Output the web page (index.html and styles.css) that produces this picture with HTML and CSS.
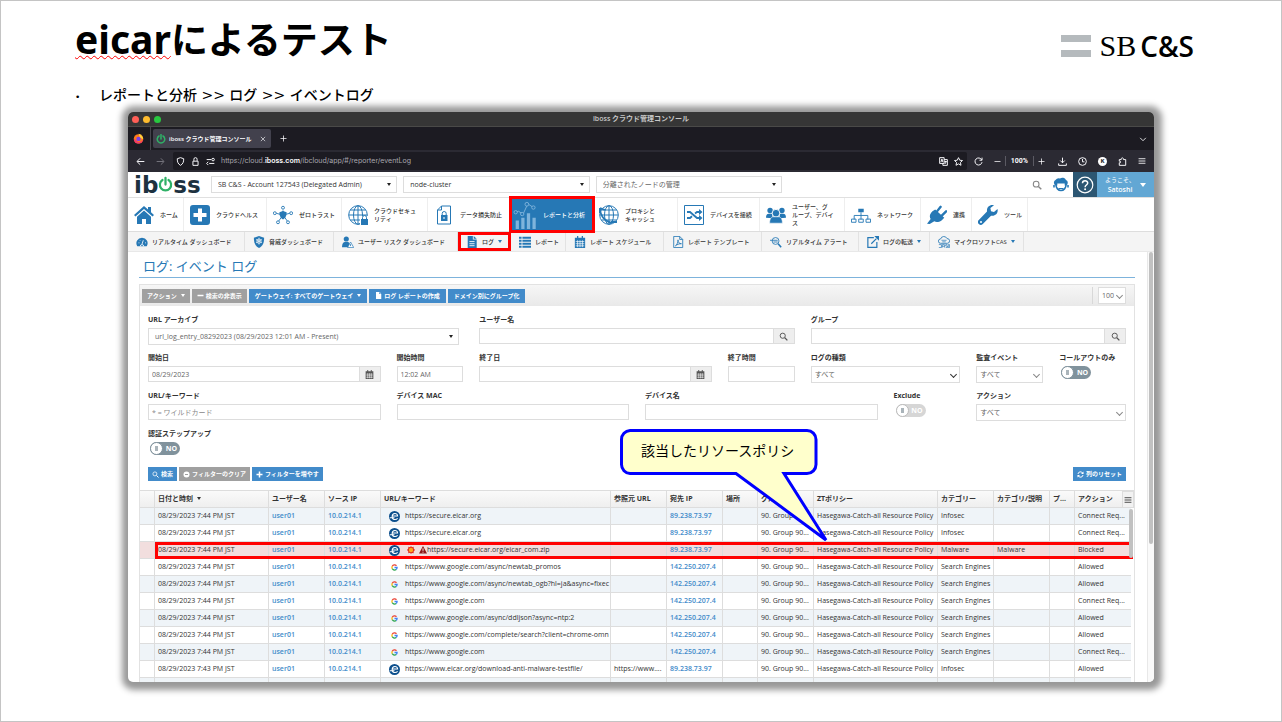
FILE: index.html
```html
<!DOCTYPE html>
<html lang="ja">
<head>
  <meta charset="utf-8">
  <title>eicarによるテスト</title>
  <link rel="stylesheet" href="styles.css">
</head>
<body>
  <!-- icon sprite -->
  <svg class="sprite" aria-hidden="true">
    <symbol id="power" viewBox="0 0 20 20"><path d="M6 4a7.500 7.500 0 1 0 8 0M10 1v9" fill="none" stroke="#2fb167" stroke-width="3" stroke-linecap="round"/></symbol>
    <symbol id="home" viewBox="0 0 20 20"><path d="M10 1 0 10l1.500 1.500L10 4l8.500 7.500L20 10l-3-2.700V2h-3v2.600zM10 5.500 3 11.700V19h5v-5h4v5h5v-7.300z"/></symbol>
    <symbol id="health" viewBox="0 0 20 20"><path fill-rule="evenodd" d="M3 0h14a3 3 0 0 1 3 3v14a3 3 0 0 1-3 3H3a3 3 0 0 1-3-3V3a3 3 0 0 1 3-3zm5 3.500V8H3.500v4H8v4.500h4V12h4.500V8H12V3.500z"/></symbol>
    <symbol id="zero" viewBox="0 0 22 20"><path d="M11 5v4M3 8l8 2 8-2M11 10l-5 7M11 10l5 7" fill="none" stroke="currentColor"/><path d="m11 5.500 4 1.500c0 4-1 6-4 8-3-2-4-4-4-8z"/><g fill="#fff" stroke="currentColor"><circle cx="11" cy="2" r="1.600"/><circle cx="2" cy="8" r="1.600"/><circle cx="20" cy="8" r="1.600"/><circle cx="5.500" cy="18" r="1.600"/><circle cx="16.500" cy="18" r="1.600"/></g></symbol>
    <symbol id="globe" viewBox="0 0 20 20"><g fill="none" stroke="currentColor"><circle cx="10" cy="10" r="9.300"/><ellipse cx="10" cy="10" rx="4.500" ry="9.300"/><path d="M10 1v18M1 10h18M2.500 5h15M2.500 15h15"/></g></symbol>
    <symbol id="globelock" viewBox="0 0 20 20"><use href="#globe"/><path d="M12 11h8v9h-8z" fill="#fff"/><path d="M13 14h7v6h-7z"/><path d="M14.500 14v-1.500a2 2 0 0 1 4 0V14" fill="none" stroke="currentColor"/></symbol>
    <symbol id="doclock" viewBox="0 0 20 20"><path d="M7.500 1H16.500v18h-13V5zM7.500 1v4h-4" fill="none" stroke="currentColor"/><path d="M7 10h6.500v6H7z"/><path d="M8.200 10V8.500a2 2 0 0 1 4 0V10" fill="none" stroke="currentColor"/><path d="M10 12v2" stroke="#fff"/></symbol>
    <symbol id="chart" viewBox="0 0 24 30"><path d="M2 21h3.500v9H2zM8 18h3.500v12H8zM14 13h3.500v17H14zM20 18h3.500v12H20z"/><path d="m2 12 3-1 5 3 5-11 6 4" fill="none" stroke="currentColor"/><g fill="#2678b5" stroke="currentColor"><circle cx="2" cy="12" r="1.800"/><circle cx="9" cy="14" r="1.800"/><circle cx="14" cy="3.500" r="2"/><circle cx="21" cy="7" r="1.800"/></g></symbol>
    <symbol id="proxy" viewBox="0 0 20 20"><use href="#globe"/><path d="M1 3c0 7 4 13 12 15M1 3l-.5 5M1 3l5 2M18 17h-6" fill="none" stroke="currentColor" stroke-width="1.800"/></symbol>
    <symbol id="shuffle" viewBox="0 0 20 20"><g fill="none" stroke="currentColor"><path d="M.5.5h19v19H.500z"/><path stroke-width="1.800" d="M3 7h3l7 6h3M3 13h3l2-1.700M11 8.500 13 7h3"/></g><path d="m15 4 3.500 3L15 10zM15 10l3.500 3L15 16z"/></symbol>
    <symbol id="users" viewBox="0 0 22 20"><circle cx="4.500" cy="5" r="3"/><circle cx="17.500" cy="5" r="3"/><path d="M0 13c0-3 1-4.500 3-4.500h4v5zM22 13c0-3-1-4.500-3-4.500h-4v5z"/><circle cx="11" cy="8" r="4.200" stroke="#fff"/><path d="M4 19c0-5 2-7 4-7h6c2 0 4 2 4 7z" stroke="#fff" stroke-width=".6"/></symbol>
    <symbol id="network" viewBox="0 0 22 20"><path d="M8 3h6v4H8z"/><path d="M11 7v8M3.500 15v-4.500h15V15M.5 14.500h5v3.500h-5zM8.500 14.500h5v3.500h-5zM16.500 14.500h5v3.500h-5z" fill="none" stroke="currentColor"/></symbol>
    <symbol id="plug" viewBox="0 0 22 20"><path d="m6 6 3-2 10 9-3 3c-3 2-6 2-8 1l-5 3-3-.5 4-5C2 11 4 8 6 6z"/><path d="m11 6 4-5M16 11l5-5" stroke="currentColor" stroke-width="2.600" stroke-linecap="round"/></symbol>
    <symbol id="wrench" viewBox="0 0 20 20"><path d="M19.500 4 16 7l-3-.8L12.400 3 16 .3C12 -.8 8.500 2 9 6.500L.8 15a2.700 2.700 0 0 0 4 4L13 10.700c4.500.8 7.500-2.500 6.500-6.700z"/><circle cx="3" cy="17" r="1" fill="#fff"/></symbol>
    <symbol id="dash" viewBox="0 0 14 14"><path d="M7 2a6.500 6.500 0 0 0-5.500 10h11A6.500 6.500 0 0 0 7 2z"/><path d="M7 9.500 8.500 5M3 8h1M10.500 8h1M4.500 5l.6.600M5 12a2 2 0 0 1 4 0" stroke="#fff" fill="none"/></symbol>
    <symbol id="shield" viewBox="0 0 14 14"><path d="M7 0 13 2c0 6-1.500 9.500-6 12C2.500 11.500 1 8 1 2z"/><g stroke="#fff" fill="none" stroke-width=".8"><circle cx="7" cy="6" r="2.500"/><path d="M7 2v8M3.500 4l7 4M10.500 4l-7 4"/></g></symbol>
    <symbol id="risk" viewBox="0 0 14 14"><circle cx="5" cy="3.500" r="3"/><path d="M0 13c0-4 1.500-6 3.500-6h3c2 0 3 2 3 6z"/><path d="m10 7 3.700 6.500H6.500z" fill="#fff" stroke="currentColor" stroke-width=".8"/><path d="M10 9.500v2.300" stroke="currentColor"/></symbol>
    <symbol id="doc" viewBox="0 0 14 14"><path d="M2 0h6v4h4.500v10H2zM9 0l3.500 3.200H9z"/><path d="M4 6.500h6M4 9h6M4 11.300h6" stroke="#fff"/></symbol>
    <symbol id="list" viewBox="0 0 14 14"><path d="M0 1h3v2.200H0zM4 1h10v2.200H4zM0 4.500h3v2.200H0zM4 4.500h10v2.200H4zM0 8h3v2.200H0zM4 8h10v2.200H4zM0 11.500h3v2.200H0zM4 11.500h10v2.200H4z"/></symbol>
    <symbol id="cal" viewBox="0 0 14 14"><path d="M1 2h12v12H1zM3.500 0h1.500v3H3.500zM9 0h1.500v3H9z"/><path d="M2 6.500h10M2 9h10M2 11.500h10M4.200 5v8M7 5v8M9.800 5v8" stroke="#fff" stroke-width=".8"/></symbol>
    <symbol id="pdf" viewBox="0 0 14 14"><path d="M2 .5h7l3.500 3.500v9.500H2zM9 .5V4h3.500M4 11.500c2-1.500 3-4 3-7 0 3 1.500 4.500 4 4.500-3 0-5 .8-7 2.500z" fill="none" stroke="currentColor"/></symbol>
    <symbol id="lens" viewBox="0 0 14 14"><circle cx="5.800" cy="5.800" r="4" fill="none" stroke="currentColor" stroke-width="1.500"/><path d="m9 9 4 4" stroke="currentColor" stroke-width="2"/></symbol>
    <symbol id="alert" viewBox="0 0 14 14"><circle cx="6.500" cy="5.800" r="4" fill="none" stroke="currentColor"/><path d="m9.500 9 3.500 4" stroke="currentColor" stroke-width="1.800"/><path d="M0 5h9M4 7h5" stroke="currentColor"/></symbol>
    <symbol id="export" viewBox="0 0 14 14"><path d="M8 2H1v11.300h10.500V7M5 9l6-6" fill="none" stroke="currentColor" stroke-width="1.400"/><path d="M8.500 0H14v5.500z"/></symbol>
    <symbol id="casb" viewBox="0 0 14 14"><path d="M3 8.500a2.500 2.500 0 0 1 0-5 4 4 0 0 1 7.500-.5 2.700 2.700 0 0 1 .5 5.500z" fill="none" stroke="currentColor"/><path d="M4 5h6M5 6.800h4M1 10h3v3.500H1M5 13.500V10h2.500v3.500M5 12h2.500M11 10H9v1.700h2v1.800H9M12 10h1.500v3.500H12z" fill="none" stroke="currentColor" stroke-width=".8"/></symbol>
    <symbol id="agent" viewBox="0 0 16 16"><path d="M3 8.500A3 3 0 0 1 2.500 3 4 4 0 0 1 7 1.500 4 4 0 0 1 13 3a3 3 0 0 1 0 5.500z"/><path d="M3 8a5 5.500 0 0 0 10 0M1 8v2.500M15 8v2.500" fill="none" stroke="currentColor" stroke-width="1.600"/><path d="M4.300 6.500h7.400v3H4.300z" fill="#fff"/><path d="M5.500 11.500h5" stroke="currentColor"/></symbol>
    <symbol id="help" viewBox="0 0 18 18"><circle cx="9" cy="9" r="7.800" fill="none" stroke="#fff" stroke-width="1.200"/><path d="M6.500 7.200C6.500 4 11.700 4 11.700 7c0 2-2.600 2-2.600 4.200" fill="none" stroke="#fff" stroke-width="1.500"/><circle cx="9.100" cy="13.300" r="1" fill="#fff"/></symbol>
    <symbol id="reset" viewBox="0 0 14 14"><path d="M2 6a5 5 0 0 1 9.500-1.500M12 8a5 5 0 0 1-9.500 1.500" fill="none" stroke="currentColor" stroke-width="2"/><path d="M13 1v5H8zM1 13V8h5z"/></symbol>
    <symbol id="clear" viewBox="0 0 14 14"><circle cx="7" cy="7" r="6"/><path d="M4 7h6" stroke="#a0a0a0" stroke-width="2"/></symbol>
    <symbol id="plus" viewBox="0 0 14 14"><path d="M7 1v12M1 7h12" stroke="currentColor" stroke-width="3"/></symbol>
    <symbol id="minus" viewBox="0 0 14 14"><path d="M1 7h12" stroke="currentColor" stroke-width="3"/></symbol>
    <symbol id="firefox" viewBox="0 0 14 14"><circle cx="7" cy="7.500" r="6" fill="#ff7a1a"/><path d="M7 1c4 1 6 4 6 7l-4-2z" fill="#ffd23c"/><path d="M1 7c0 9 12 8 12 1-2 3-4 4-7 3z" fill="#f5376a"/><circle cx="7" cy="7.500" r="2.800" fill="#7a41e8"/></symbol>
    <symbol id="google" viewBox="0 0 14 14"><g fill="none" stroke-width="2.600"><path d="M11 3.500A5.200 5.200 0 0 0 2.500 4.700" stroke="#ea4335"/><path d="M2.500 4.700a5.200 5.200 0 0 0 0 4.600" stroke="#fbbc05"/><path d="M2.500 9.300a5.200 5.200 0 0 0 8 1.500" stroke="#34a853"/><path d="M10.500 10.800A5 5 0 0 0 12.200 7H7" stroke="#4285f4"/></g></symbol>
    <symbol id="eicar" viewBox="0 0 14 14"><circle cx="7" cy="7" r="7" fill="#0c4f8c"/><path d="M4 6.500h7c0-4.500-7-4.500-7 .5s5 4.500 7 2.500M1 8.500h6" fill="none" stroke="#fff" stroke-width="1.300"/></symbol>
    <symbol id="virus" viewBox="0 0 14 14"><path d="m7 0 1.700 2.200L11.500 1.500l.3 2.900L14 7l-2.200 2.200-.3 3.300-3-.4L7 14l-1.700-2-3 .5-.2-3.200L0 7l2.200-2.600.2-2.900 3 .7z" fill="#e22b1b"/><circle cx="7" cy="7" r="3.800" fill="#ffa51f"/></symbol>
    <symbol id="warn" viewBox="0 0 14 14"><path d="m7 0 7 13H0z" fill="#8e1616"/><path d="M7 4v4.500M7 10v1.600" stroke="#fff" stroke-width="1.600"/></symbol>
    <symbol id="back" viewBox="0 0 14 14"><path d="M13 7H2M6.500 2 1.500 7l5 5"/></symbol>
    <symbol id="fwd" viewBox="0 0 14 14"><path d="M1 7h11M7.500 2l5 5-5 5"/></symbol>
    <symbol id="guard" viewBox="0 0 14 14"><path d="m7 1 5 1.700c0 5-1 8-5 10.300C3 10.700 2 7.700 2 2.700z"/></symbol>
    <symbol id="lock" viewBox="0 0 14 14"><path d="M3 6.500h8V13H3zM4.500 6V3.500a2.500 2.500 0 0 1 5 0V6"/></symbol>
    <symbol id="perm" viewBox="0 0 14 14"><path d="M1 4h7M5 10h8M3.500 7.500 1 10l2.500 2.500"/><circle cx="11" cy="4" r="2"/></symbol>
    <symbol id="translate" viewBox="0 0 14 14"><path d="M1 1h7v9H1zM3 8l1.500-5L6 8M8 4h5v9H6v-3M8.500 7H12M10 6v1M9 11l2.500-4"/></symbol>
    <symbol id="star" viewBox="0 0 14 14"><path d="m7 1 1.900 4 4.300.500L10 8.500l.9 4.400L7 10.700l-3.900 2.200.9-4.400L.8 5.500l4.300-.5z"/></symbol>
    <symbol id="reload" viewBox="0 0 14 14"><path d="M12 4.500A5.500 5.500 0 1 0 12.500 8M12.500 1v4h-4"/></symbol>
    <symbol id="down" viewBox="0 0 14 14"><path d="M7 1v8M3.500 5.500 7 9l3.500-3.500M1 10v3h12v-3"/></symbol>
    <symbol id="clock" viewBox="0 0 14 14"><circle cx="7" cy="7" r="6"/><path d="M7 3v4.500h3"/></symbol>
    <symbol id="puzzle" viewBox="0 0 14 14"><path d="M2 13V9c3 .5 3-3 0-2.500V4h3c-.5-3.500 4-3.500 3.500 0H12v9z"/></symbol>
    <symbol id="menu" viewBox="0 0 14 14"><path d="M1 3h12M1 7h12M1 11h12"/></symbol>
    <symbol id="close" viewBox="0 0 14 14"><path d="m2 2 10 10M12 2 2 12"/></symbol>
    <symbol id="add" viewBox="0 0 14 14"><path d="M7 1v12M1 7h12"/></symbol>
    <symbol id="less" viewBox="0 0 14 14"><path d="M1 7h12"/></symbol>
    <symbol id="chev" viewBox="0 0 14 14"><path d="m2 5 5 5 5-5"/></symbol>
  </svg>

  <main class="slide">
    <header class="slide-head">
      <h1><span class="typo">eicar</span>によるテスト</h1>
      <div class="brand"><span class="bars"></span><span class="brand-sb">SB</span><span class="brand-cs">C&amp;S</span></div>
    </header>
    <ul class="steps"><li>レポートと分析 &gt;&gt; ログ &gt;&gt; イベントログ</li></ul>

    <section class="window">
      <div class="titlebar"><div class="lights"><i class="red"></i><i class="yellow"></i><i class="green"></i></div><span>iboss クラウド管理コンソール</span></div>
      <div class="tabs">
        <span class="pinned"><svg class="i11"><use href="#firefox"/></svg></span>
        <div class="tab"><svg class="i10"><use href="#power"/></svg><span>iboss クラウド管理コンソール</span><button class="line" aria-label="閉じる"><svg class="i6"><use href="#close"/></svg></button></div>
        <button class="line" aria-label="新しいタブ"><svg class="i7"><use href="#add"/></svg></button>
        <button class="line tabs-more" aria-label="タブ一覧"><svg class="i8"><use href="#chev"/></svg></button>
      </div>
      <div class="toolbar line">
        <button aria-label="戻る"><svg class="i9"><use href="#back"/></svg></button>
        <button class="dim" aria-label="進む"><svg class="i9"><use href="#fwd"/></svg></button>
        <div class="urlbar">
          <svg class="i9"><use href="#guard"/></svg><svg class="i9"><use href="#lock"/></svg><svg class="i9"><use href="#perm"/></svg>
          <span class="url">https://cloud.<b>iboss.com</b>/ibcloud/app/#/reporter/eventLog</span>
          <svg class="i9"><use href="#translate"/></svg><svg class="i9"><use href="#star"/></svg>
        </div>
        <button aria-label="再読み込み"><svg class="i9"><use href="#reload"/></svg></button>
        <div class="zoomer"><button aria-label="縮小"><svg class="i7"><use href="#less"/></svg></button><b>100%</b><button aria-label="拡大"><svg class="i7"><use href="#add"/></svg></button></div>
        <div class="tools">
          <button aria-label="ダウンロード"><svg class="i9"><use href="#down"/></svg></button>
          <button aria-label="履歴"><svg class="i9"><use href="#clock"/></svg></button>
          <button class="avatar">K</button>
          <button aria-label="拡張機能"><svg class="i9"><use href="#puzzle"/></svg></button>
          <button aria-label="メニュー"><svg class="i8"><use href="#menu"/></svg></button>
        </div>
      </div>

      <div class="apphead">
        <a class="logo" href="#">ib<svg><use href="#power"/></svg>ss</a>
        <div class="pickers">
          <div class="select"><select aria-label="アカウント"><option>SB C&amp;S - Account 127543 (Delegated Admin)</option></select></div>
          <div class="select"><select aria-label="クラスタ"><option>node-cluster</option></select></div>
          <div class="select muted"><select aria-label="ノード"><option>分離されたノードの管理</option></select></div>
        </div>
        <button class="head-search" aria-label="検索"><svg class="i10"><use href="#lens"/></svg></button>
        <button class="head-agent" aria-label="サポート"><svg class="i16"><use href="#agent"/></svg></button>
        <button class="head-help" aria-label="ヘルプ"><svg class="i18"><use href="#help"/></svg></button>
        <button class="welcome"><span>ようこそ、<br><b>Satoshi</b></span><i class="caret"></i></button>
      </div>

      <nav class="nav">
        <a href="#"><svg><use href="#home"/></svg>ホーム</a>
        <a href="#"><svg><use href="#health"/></svg>クラウドヘルス</a>
        <a href="#"><svg><use href="#zero"/></svg>ゼロトラスト</a>
        <a href="#"><svg><use href="#globelock"/></svg><span>クラウドセキュ<br>リティ</span></a>
        <a href="#"><svg><use href="#doclock"/></svg>データ損失防止</a>
        <a href="#" class="active"><svg><use href="#chart"/></svg>レポートと分析</a>
        <a href="#"><svg><use href="#proxy"/></svg><span>プロキシと<br>キャッシュ</span></a>
        <a href="#"><svg><use href="#shuffle"/></svg>デバイスを接続</a>
        <a href="#"><svg><use href="#users"/></svg><span>ユーザー、グ<br>ループ、デバイ<br>ス</span></a>
        <a href="#"><svg><use href="#network"/></svg>ネットワーク</a>
        <a href="#"><svg><use href="#plug"/></svg>連携</a>
        <a href="#"><svg><use href="#wrench"/></svg>ツール</a>
      </nav>
      <nav class="subnav">
        <a href="#"><svg><use href="#dash"/></svg>リアルタイム ダッシュボード</a>
        <a href="#"><svg><use href="#shield"/></svg>脅威ダッシュボード</a>
        <a href="#"><svg><use href="#risk"/></svg>ユーザー リスク ダッシュボード</a>
        <a href="#" class="marked"><svg><use href="#doc"/></svg>ログ<i class="caret"></i></a>
        <a href="#"><svg><use href="#list"/></svg>レポート</a>
        <a href="#"><svg><use href="#cal"/></svg>レポート スケジュール</a>
        <a href="#"><svg><use href="#pdf"/></svg>レポート テンプレート</a>
        <a href="#"><svg><use href="#alert"/></svg>リアルタイム アラート</a>
        <a href="#"><svg><use href="#export"/></svg>ログの転送<i class="caret"></i></a>
        <a href="#"><svg><use href="#casb"/></svg>マイクロソフトCAS<i class="caret"></i></a>
      </nav>

      <div class="page">
        <div class="content">
          <h2>ログ: イベント ログ</h2>
          <div class="panel">
            <div class="actions">
              <button class="btn gray">アクション<i class="caret"></i></button>
              <button class="btn gray"><svg><use href="#minus"/></svg>検索の非表示</button>
              <button class="btn">ゲートウェイ: すべてのゲートウェイ<i class="caret"></i></button>
              <button class="btn"><svg><use href="#doc"/></svg>ログ レポートの作成</button>
              <button class="btn">ドメイン別にグループ化</button>
              <div class="limit"><div class="select chevron"><select aria-label="表示件数"><option>100</option></select></div></div>
            </div>

            <form class="filters">
              <div class="field w4 archive"><label for="archive">URL アーカイブ</label><div class="select"><select id="archive"><option>url_log_entry_08292023 (08/29/2023 12:01 AM - Present)</option></select></div></div>
              <div class="field w4"><label for="user">ユーザー名</label><div class="group"><input id="user"><button type="button" aria-label="検索"><svg><use href="#lens"/></svg></button></div></div>
              <div class="field w4"><label for="grp">グループ</label><div class="group"><input id="grp"><button type="button" aria-label="検索"><svg><use href="#lens"/></svg></button></div></div>

              <div class="field w3"><label for="sdate">開始日</label><div class="group"><input id="sdate" value="08/29/2023"><button type="button" aria-label="日付"><svg><use href="#cal"/></svg></button></div></div>
              <div class="field"><label for="stime">開始時間</label><input id="stime" value="12:02 AM"></div>
              <div class="field w3"><label for="edate">終了日</label><div class="group"><input id="edate"><button type="button" aria-label="日付"><svg><use href="#cal"/></svg></button></div></div>
              <div class="field"><label for="etime">終了時間</label><input id="etime"></div>
              <div class="field w2"><label for="kind">ログの種類</label><div class="select chevron dark"><select id="kind"><option>すべて</option></select></div></div>
              <div class="field"><label for="audit">監査イベント</label><div class="select chevron"><select id="audit"><option>すべて</option></select></div></div>
              <div class="field"><label for="callout">コールアウトのみ</label><span class="toggle"><input type="checkbox" id="callout"><span>NO</span></span></div>

              <div class="field w3"><label for="kw">URL/キーワード</label><input id="kw" placeholder="* = ワイルドカード"></div>
              <div class="field w3"><label for="mac">デバイス MAC</label><input id="mac"></div>
              <div class="field w3"><label for="dev">デバイス名</label><input id="dev"></div>
              <div class="field"><label for="excl">Exclude</label><span class="toggle off"><input type="checkbox" id="excl" disabled><span>NO</span></span></div>
              <div class="field w2"><label for="act">アクション</label><div class="select chevron"><select id="act"><option>すべて</option></select></div></div>

              <div class="field w12"><label for="stepup">認証ステップアップ</label><span class="toggle"><input type="checkbox" id="stepup"><span>NO</span></span></div>
            </form>

            <div class="filter-actions">
              <button class="btn"><svg><use href="#lens"/></svg>検索</button>
              <button class="btn gray"><svg><use href="#clear"/></svg>フィルターのクリア</button>
              <button class="btn"><svg><use href="#plus"/></svg>フィルターを増やす</button>
              <button class="btn push"><svg><use href="#reset"/></svg>列のリセット</button>
            </div>

            <div class="grid">
              <table>
                <colgroup>
                  <col class="c-sel"><col class="c-date"><col class="c-mid"><col class="c-mid"><col class="c-url"><col class="c-mid"><col class="c-mid"><col class="c-place"><col class="c-mid"><col class="c-policy"><col class="c-mid"><col class="c-mid"><col class="c-short"><col class="c-mid">
                </colgroup>
                <thead>
                  <tr><th></th><th>日付と時刻 <i class="caret"></i></th><th>ユーザー名</th><th>ソース IP</th><th>URL/キーワード</th><th>参照元 URL</th><th>宛先 IP</th><th>場所</th><th>グループ</th><th>ZTポリシー</th><th>カテゴリー</th><th>カテゴリ/説明</th><th>プ...</th><th>アクション</th></tr>
                </thead>
                <tbody id="logRows"></tbody>
              </table>
              <button class="grid-menu line" aria-label="列メニュー"><svg class="i8"><use href="#menu"/></svg></button>
              <i class="grid-thumb"></i>
            </div>
          </div>
        </div>
        <div class="scroll"><i></i></div>
      </div>
    </section>

    <aside class="callout">
      <svg viewBox="0 0 210 116"><path d="M10 1.500h177a9 9 0 0 1 9 9v25a9 9 0 0 1-9 9h-23L206 111 116 44.500H10a9 9 0 0 1-8.500-9v-25a9 9 0 0 1 8.500-9z"/></svg>
      <p>該当したリソースポリシ</p>
    </aside>
  </main>

  <script>
    const EICAR = '89.238.73.97';
    const GOOGLE = '142.250.207.4';

    // [time, icon, url, referrer, destination, category, description, action]
    const LOGS = [
      ['7:44', 'eicar', 'https://secure.eicar.org', '', EICAR, 'Infosec', '', 'Connect Req...'],
      ['7:44', 'eicar', 'https://secure.eicar.org', '', EICAR, 'Infosec', '', 'Connect Req...'],
      ['7:44', 'eicar', 'https://secure.eicar.org/eicar_com.zip', '', EICAR, 'Malware', 'Malware', 'Blocked'],
      ['7:44', 'google', 'https://www.google.com/async/newtab_promos', '', GOOGLE, 'Search Engines', '', 'Allowed'],
      ['7:44', 'google', 'https://www.google.com/async/newtab_ogb?hl=ja&amp;async=fixec', '', GOOGLE, 'Search Engines', '', 'Allowed'],
      ['7:44', 'google', 'https://www.google.com', '', GOOGLE, 'Search Engines', '', 'Connect Req...'],
      ['7:44', 'google', 'https://www.google.com/async/ddljson?async=ntp:2', '', GOOGLE, 'Search Engines', '', 'Allowed'],
      ['7:44', 'google', 'https://www.google.com/complete/search?client=chrome-omn', '', GOOGLE, 'Search Engines', '', 'Allowed'],
      ['7:44', 'google', 'https://www.google.com', '', GOOGLE, 'Search Engines', '', 'Connect Req...'],
      ['7:43', 'eicar', 'https://www.eicar.org/download-anti-malware-testfile/', 'https://www....', EICAR, 'Infosec', '', 'Allowed']
    ];

    const rows = LOGS.map(([time, icon, url, ref, dest, cat, desc, action]) => {
      const blocked = action === 'Blocked';
      const flags = blocked ? '<svg class="flag"><use href="#virus"/></svg><svg class="flag"><use href="#warn"/></svg>' : '';
      return `
        <tr class="${blocked ? 'blocked' : ''}">
          <td></td>
          <td>08/29/2023 ${time} PM JST</td>
          <td><a href="#">user01</a></td>
          <td><a href="#">10.0.214.1</a></td>
          <td><div class="site"><svg class="${icon}"><use href="#${icon}"/></svg>${flags}<span>${url}</span></div></td>
          <td>${ref}</td>
          <td><a href="#">${dest}</a></td>
          <td></td>
          <td>90. Group 90...</td>
          <td>Hasegawa-Catch-all Resource Policy</td>
          <td>${cat}</td>
          <td>${desc}</td>
          <td></td>
          <td>${action}</td>
        </tr>
      `;
    });
    rows.push(`<tr>${'<td></td>'.repeat(14)}</tr>`);
    document.getElementById('logRows').innerHTML = rows.join('');
  </script>
</body>
</html>
```
FILE: styles.css
```css
* { box-sizing: border-box; }
body {
  margin: 0;
  font-family: "Open Sans", "Noto Sans CJK JP", sans-serif;
  font-size: 7px;
  line-height: 10px;
  color: #333;
}
a { color: inherit; text-decoration: none; }
button, input, select { font: inherit; color: inherit; margin: 0; }
button { border: 0; padding: 0; background: none; cursor: pointer; }
svg { display: block; flex: none; fill: currentColor; }
.sprite { position: absolute; width: 0; height: 0; }
.i6 { width: 6px; height: 6px; }
.i7 { width: 7px; height: 7px; }
.i8 { width: 8px; height: 8px; }
.i9 { width: 9px; height: 9px; }
.i10 { width: 10px; height: 10px; }
.i11 { width: 11px; height: 11px; }
.i16 { width: 16px; height: 16px; }
.i18 { width: 18px; height: 18px; }
.line svg { fill: none; stroke: currentColor; stroke-width: 1.5; }
.caret {
  display: inline-block;
  border: 2px solid transparent;
  border-top: 3px solid currentColor;
  border-bottom: 0;
}

/* slide */
.slide {
  position: relative;
  display: flex;
  flex-direction: column;
  height: 100vh;
  padding: 12px 127px 39px;
  border: 1px solid #c4c4c4;
  background: #fff;
  overflow: hidden;
}
.slide-head {
  display: flex;
  justify-content: space-between;
  margin: 0 -40px 0 -53px;
}
h1 {
  margin: 0;
  font-family: "Noto Sans", "Noto Sans CJK JP", sans-serif;
  font-size: 37px;
  line-height: 52px;
  color: #000;
}
.typo { font-size: 39px; text-decoration: underline wavy #f00 1px; text-underline-offset: 1px; text-decoration-skip-ink: none; }
.brand {
  display: flex;
  align-items: center;
  height: 66px;
  color: #000;
  line-height: 30px;
}
.bars {
  width: 30px;
  height: 22px;
  margin-right: 8px;
  border: solid #b5babd;
  border-width: 7px 0;
}
.brand-sb { font-family: "Liberation Serif", serif; font-size: 30px; margin-right: 4px; }
.brand-cs { font-family: "Open Sans", sans-serif; font-size: 28px; font-weight: 600; }
.steps {
  margin: 6px 0 5px -53px;
  padding: 0;
  list-style: none;
  font-family: "DejaVu Sans", "Noto Sans CJK JP", sans-serif;
  font-size: 14px;
  font-weight: 500;
  line-height: 20px;
  color: #000;
}
.steps li::before { content: "•"; display: inline-block; width: 24px; font-size: 9px; }

/* browser window */
.window {
  flex: 1;
  min-height: 0;
  display: flex;
  flex-direction: column;
  border-radius: 5px;
  background: #fff;
  box-shadow: 1px 1px 6px 7px #999;
  overflow: hidden;
}
.window > * { flex: none; }
.titlebar {
  display: grid;
  grid-template-columns: 1fr auto 1fr;
  align-items: center;
  height: 15px;
  background: #363636;
  border-bottom: 1px solid #4a4a48;
  color: #c8c8c8;
  font-weight: 600;
}
.lights { display: flex; gap: 4px; padding-left: 4px; }
.lights i { width: 7px; height: 7px; border-radius: 50%; }
.red { background: #ff5f57; }
.yellow { background: #febc2e; }
.green { background: #28c840; }
.tabs {
  display: flex;
  align-items: center;
  height: 23px;
  background: #1c1b22;
  color: #fbfbfe;
}
.pinned { align-self: stretch; display: flex; align-items: center; width: 23px; padding-left: 5px; border-right: 1px solid #45444c; }
.tab {
  display: flex;
  align-items: center;
  gap: 3px;
  width: 118px;
  height: 19px;
  margin: 0 9px 0 2px;
  padding: 0 5px 0 3px;
  border-radius: 2px;
  background: #42414d;
  font-size: 6px;
  font-weight: 600;
  white-space: nowrap;
}
.tab button { margin-left: auto; }
.tabs-more { margin: 0 7px 0 auto; }
.toolbar {
  display: flex;
  align-items: center;
  height: 22px;
  padding: 0 8px;
  background: #2b2a33;
  color: #fbfbfe;
}
.toolbar > button { margin-right: 11px; }
.toolbar .dim { color: #77767e; margin-right: 8px; }
.urlbar {
  flex: 1;
  display: flex;
  align-items: center;
  gap: 6px;
  height: 18px;
  margin-right: 7px;
  padding: 0 4px 0 3px;
  border-radius: 2px;
  background: #1c1b22;
}
.url { flex: 1; font-family: Inter, sans-serif; color: #a8a7ae; }
.url b { color: #fbfbfe; font-weight: 600; }
.zoomer { display: flex; align-items: center; margin-right: 13px; }
.zoomer b { margin: 0 4px; padding: 0 5px; border: solid #5b5a63; border-width: 0 1px; font-family: Roboto, sans-serif; }
.tools { display: flex; align-items: center; gap: 11px; }
.avatar { width: 9px; height: 9px; border-radius: 50%; background: #fff; color: #222; font-size: 6px; font-weight: 700; line-height: 9px; }

/* console header */
.apphead {
  display: flex;
  align-items: center;
  height: 26px;
  border-bottom: 1px solid #e0e0e0;
}
.logo {
  display: flex;
  align-items: center;
  width: 76px;
  margin-right: 7px;
  padding-left: 6px;
  font-family: "DejaVu Sans", sans-serif;
  font-size: 23px;
  font-weight: 700;
  line-height: 24px;
  color: #1d3140;
}
.logo svg { width: 15px; height: 17px; }
.pickers { display: grid; grid-template-columns: repeat(3, 1fr); gap: 6px; flex: 571; }
.head-search { flex: 260; display: flex; justify-content: flex-end; margin-right: 11px; color: #888; }
.head-agent { margin-right: 4px; color: #2678b5; }
.head-help { display: grid; place-items: center; align-self: stretch; width: 24px; background: #2c5672; }
.welcome {
  display: flex;
  align-items: center;
  justify-content: space-between;
  align-self: stretch;
  width: 57px;
  padding: 0 8px;
  background: #62a7d4;
  color: #fff;
  font-size: 6px;
}
.welcome b { font-size: 7px; font-weight: 600; }
.welcome .caret { border-width: 4px 3px 0; }

.select { position: relative; height: 17px; border: 1px solid #ddd; background: #fff; }
.select select {
  display: block;
  width: 100%;
  height: 100%;
  padding: 0 8px 0 6px;
  border: 0;
  background: none;
  appearance: none;
}
.select::after {
  content: "";
  position: absolute;
  right: 5px;
  top: 6px;
  border: 2px solid transparent;
  border-top: 3px solid #222;
  border-bottom: 0;
  pointer-events: none;
}
.select.chevron::after {
  right: 3px;
  top: 5px;
  width: 4px;
  height: 4px;
  border: solid #888;
  border-width: 0 1px 1px 0;
  transform: rotate(45deg);
}
.select.dark::after { border-color: #333; }
.select.chevron select { padding-left: 3px; }
.muted { color: #666; }

/* navigation */
.nav, .subnav { display: grid; font-size: 6px; font-weight: 500; }
.nav {
  grid-template-columns: 56fr 83fr 75fr 86fr 83fr 82fr 85fr 82fr 85fr 76fr 51fr 56fr 126fr;
  height: 34px;
  border-bottom: 1px solid #ddd;
  line-height: 8px;
}
.nav a {
  display: flex;
  align-items: center;
  gap: 6px;
  padding-left: 6px;
  border-right: 1px solid #eee;
  white-space: nowrap;
}
.nav svg { width: 20px; height: 20px; color: #2678b5; }
.nav .active {
  padding-left: 2px;
  background: #2678b5;
  color: #fff;
  outline: 3px solid #f00;
  outline-offset: -1px;
  position: relative;
}
.nav .active svg { width: 24px; height: 28px; color: #7fb4dc; }
.subnav {
  grid-template-columns: 117fr 89fr 124fr 53fr 55fr 98fr 98fr 97fr 71fr 94fr 130fr;
  height: 20px;
  background: #f4f4f4;
  border-bottom: 1px solid #e8e8e8;
}
.subnav a {
  display: flex;
  align-items: center;
  gap: 4px;
  padding-left: 8px;
  border-right: 1px solid #e2e2e2;
  white-space: nowrap;
}
.subnav svg { width: 12px; height: 12px; color: #2678b5; }
.subnav .caret { color: #2678b5; }
.subnav .marked { outline: 3px solid #f00; outline-offset: -3px; }

/* page */
.window .page { flex: 1; min-height: 0; display: flex; }
.content { flex: 1; min-width: 0; padding: 0 12px 0 11px; }
h2 {
  margin: 0 0 6px;
  padding: 5px 4px 2px;
  border-bottom: 1px solid #7db3dc;
  font-size: 13px;
  font-weight: 400;
  line-height: 18px;
  color: #2678b5;
}
.scroll { flex: none; width: 7px; padding: 0 1px; background: #fafafa; border-left: 1px solid #e8e8e8; }
.scroll i { display: block; height: 68%; border-radius: 3px; background: #c1c1c1; }
.panel { border: 1px solid #e2e2e2; }
.actions {
  display: flex;
  align-items: center;
  gap: 2px;
  height: 21px;
  padding: 0 8px 0 2px;
  background: linear-gradient(#f6f6f6, #e9e9e9);
}
.btn {
  display: flex;
  align-items: center;
  gap: 2px;
  height: 14px;
  padding: 0 4px;
  background: #428bca;
  color: #fff;
  font-size: 6px;
  font-weight: 600;
  white-space: nowrap;
}
.actions .btn { padding: 0 5px; }
.actions .btn:not(.gray) { padding: 0 6px; }
.btn svg { width: 7px; height: 7px; }
.btn .caret { margin-left: 2px; }
.gray { background: #a0a0a0; }
.limit { margin-left: auto; padding-left: 5px; border-left: 1px solid #d8d8d8; color: #666; }
.limit .select { width: 28px; }

.filters {
  display: grid;
  grid-template-columns: repeat(12, 1fr);
  gap: 7px 16px;
  padding: 8px 8px 0;
}
.w2 { grid-column: span 2; }
.w3 { grid-column: span 3; }
.w4 { grid-column: span 4; }
.w12 { grid-column: span 12; }
.field { display: flex; flex-direction: column; gap: 2px; min-width: 0; color: #666; }
.field label { color: #333; font-weight: 700; line-height: 12px; white-space: nowrap; }
.field > input, .group input {
  width: 100%;
  min-width: 0;
  height: 16px;
  padding: 0 3px;
  border: 1px solid #ddd;
  background: #fff;
}
.field input::placeholder { color: #888; }
.archive { padding-right: 4px; }
.group { display: flex; }
.group button {
  display: grid;
  place-items: center;
  flex: none;
  width: 21px;
  height: 16px;
  border: 1px solid #ddd;
  border-left: 0;
  background: #eee;
  color: #555;
}
.group svg { width: 9px; height: 9px; }
.toggle {
  position: relative;
  display: flex;
  align-items: center;
  justify-content: flex-end;
  width: 30px;
  height: 13px;
  margin-left: 2px;
  padding-right: 3px;
  border-radius: 7px;
  background: #80929c;
  color: #fff;
  font-weight: 700;
}
.toggle input {
  position: absolute;
  left: 0;
  top: 0;
  width: 13px;
  height: 13px;
  margin: 0;
  appearance: none;
  border: 1px solid #80929c;
  border-radius: 50%;
  background: linear-gradient(#aab4ba, #aab4ba) center / 3px 5px no-repeat #fff;
}
.toggle.off { background: #d6d6d6; }
.toggle.off input { border-color: #bbb; }
.filter-actions { display: flex; gap: 2px; padding: 12px 8px 9px; }
.push { margin-left: auto; }

/* log table */
.grid { position: relative; padding-right: 6px; border-top: 1px solid #ddd; background: linear-gradient(#fafafa, #eee) top / 100% 17px no-repeat; }
table { width: 100%; table-layout: fixed; border-collapse: separate; border-spacing: 0; }
.c-sel { width: 15px; }
.c-date { width: 114px; }
.c-mid { width: 56px; }
.c-url { width: 230px; }
.c-place { width: 35px; }
.c-policy { width: 124px; }
.c-short { width: 25px; }
th, td {
  padding: 0 0 0 3px;
  border-right: 1px solid #ddd;
  border-bottom: 1px solid #ddd;
  text-align: left;
  white-space: nowrap;
  overflow: hidden;
}
th { height: 17px; font-weight: 700; }
th .caret { margin-left: 2px; vertical-align: 1px; }
td { height: 17px; }
th:last-child, td:last-child { border-right: 0; }
tbody tr:nth-child(odd) { background: #eff4f8; }
tbody tr:nth-child(even) { background: #fff; }
td a { color: #428bca; font-weight: 600; }
.site { display: flex; align-items: center; height: 16px; padding-left: 5px; }
.site svg { width: 11px; height: 11px; margin-right: 5px; }
.site .google { width: 7px; height: 7px; margin: 0 7px 0 2px; }
.site .flag { width: 8px; height: 8px; margin: 0 0 0 2px; }
.site .flag + .flag { margin-left: 4px; }
tbody tr.blocked { position: relative; background: #f2dede; }
.blocked::after {
  content: "";
  position: absolute;
  inset: 0 -2px 0 15px;
  border: 3px solid #f00;
}
.grid-menu {
  position: absolute;
  top: 0;
  right: 0;
  display: grid;
  place-items: center;
  width: 12px;
  height: 17px;
  border: 1px solid #ddd;
  background: #f2f2f2;
}
.grid-thumb { position: absolute; top: 18px; right: 1px; width: 4px; height: 49px; border-radius: 2px; background: #c1c1c1; }

/* annotation */
.callout { position: absolute; left: 619px; top: 428px; width: 210px; }
.callout svg { width: 210px; height: 116px; fill: #ffc; stroke: #00f; stroke-width: 3; }
.callout p {
  position: absolute;
  left: 21px;
  top: 11px;
  margin: 0;
  font-family: "Noto Sans CJK JP", sans-serif;
  font-size: 14px;
  line-height: 20px;
  color: #000;
}
```
